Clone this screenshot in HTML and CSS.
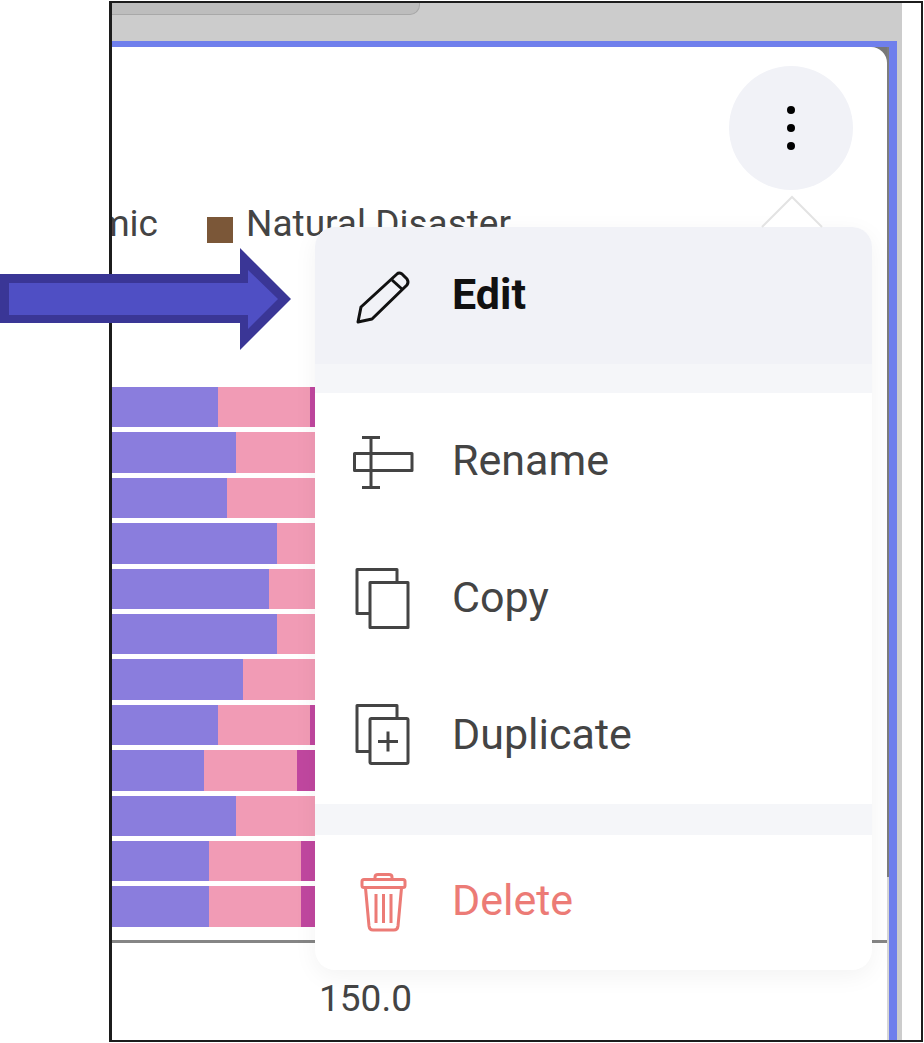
FILE: index.html
```html
<!DOCTYPE html>
<html lang="en">
<head>
    <meta charset="UTF-8">
    <title>Widget menu</title>
    <link rel="stylesheet" href="styles.css">
</head>
<body>
<div class="frame">
    <div class="window">
        <div class="top-strip">
            <div class="tab"></div>
        </div>
        <div class="panel">
            <div class="card">
                <div class="card-head">
                    <div class="kebab">
                        <span class="dot"></span>
                        <span class="dot"></span>
                        <span class="dot"></span>
                    </div>
                </div>
                <div class="legend">
                    <div class="legend-item"><span class="swatch swatch-purple"></span>Economic</div>
                    <div class="legend-item"><span class="swatch swatch-brown"></span>Natural Disaster</div>
                </div>
                <div class="chart">
                    <div class="bar"><span class="seg-a" style="width: 106px"></span><span class="seg-b" style="width: 92px"></span><span class="seg-c"></span></div>
                    <div class="bar"><span class="seg-a" style="width: 124px"></span><span class="seg-b" style="width: 92px"></span><span class="seg-c"></span></div>
                    <div class="bar"><span class="seg-a" style="width: 115px"></span><span class="seg-b" style="width: 92px"></span><span class="seg-c"></span></div>
                    <div class="bar"><span class="seg-a" style="width: 165px"></span><span class="seg-b" style="width: 92px"></span><span class="seg-c"></span></div>
                    <div class="bar"><span class="seg-a" style="width: 157px"></span><span class="seg-b" style="width: 92px"></span><span class="seg-c"></span></div>
                    <div class="bar"><span class="seg-a" style="width: 165px"></span><span class="seg-b" style="width: 92px"></span><span class="seg-c"></span></div>
                    <div class="bar"><span class="seg-a" style="width: 131px"></span><span class="seg-b" style="width: 92px"></span><span class="seg-c"></span></div>
                    <div class="bar"><span class="seg-a" style="width: 106px"></span><span class="seg-b" style="width: 92px"></span><span class="seg-c"></span></div>
                    <div class="bar"><span class="seg-a" style="width: 92px"></span><span class="seg-b" style="width: 93px"></span><span class="seg-c"></span></div>
                    <div class="bar"><span class="seg-a" style="width: 124px"></span><span class="seg-b" style="width: 92px"></span><span class="seg-c"></span></div>
                    <div class="bar"><span class="seg-a" style="width: 97px"></span><span class="seg-b" style="width: 92px"></span><span class="seg-c"></span></div>
                    <div class="bar"><span class="seg-a" style="width: 97px"></span><span class="seg-b" style="width: 92px"></span><span class="seg-c"></span></div>
                </div>
                <div class="axis">
                    <span class="tick">150.0</span>
                </div>
            </div>
            <div class="track">
                <div class="thumb"></div>
            </div>
        </div>
    </div>

    <div class="menu">
        <svg class="menu-tip" width="64" height="34" viewBox="0 0 64 34">
            <path d="M2 32 L32 2 L62 32" fill="#fff" stroke="#e3e3e3" stroke-width="2"/>
        </svg>
        <div class="menu-item menu-item-active">
            <svg class="icon icon-dark" viewBox="0 0 70 70">
                <path d="M8 61 L11 46 L47 13 Q49 11 52 13 L57 18 Q59 21 57 24 L22 58 Z"/>
                <path d="M42 19 L53 29"/>
            </svg>
            <span class="menu-label">Edit</span>
        </div>
        <div class="menu-sep"></div>
        <div class="menu-item">
            <svg class="icon" viewBox="0 0 70 70">
                <rect x="4.500" y="26.500" width="57.500" height="17"/>
                <path d="M21 10.500 V60.500 M12 10.500 H30 M12 60.500 H30"/>
            </svg>
            <span class="menu-label">Rename</span>
        </div>
        <div class="menu-item">
            <svg class="icon" viewBox="0 0 70 70">
                <rect x="7" y="5.500" width="40" height="44"/>
                <rect class="icon-front" x="20" y="18.500" width="38" height="45"/>
            </svg>
            <span class="menu-label">Copy</span>
        </div>
        <div class="menu-item">
            <svg class="icon" viewBox="0 0 70 70">
                <rect x="7" y="4.500" width="40" height="46"/>
                <rect class="icon-front" x="20" y="17.500" width="38" height="45" rx="1.500"/>
                <path d="M28 40.500 H48 M38 30.500 V50.500"/>
            </svg>
            <span class="menu-label">Duplicate</span>
        </div>
        <div class="menu-sep menu-sep-tall"></div>
        <div class="menu-item menu-item-delete">
            <svg class="icon icon-red" viewBox="0 0 70 70">
                <rect x="12" y="11.500" width="43" height="8" rx="2"/>
                <path d="M25 11 V9 Q25 6.500 28 6.500 H39 Q42 6.500 42 9 V11"/>
                <path d="M15.500 20 L19 58 Q19.500 62 23 62 H44 Q47.500 62 48 58 L51.500 20"/>
                <path d="M26 26 V55 M33.500 26 V55 M41 26 V55"/>
            </svg>
            <span class="menu-label">Delete</span>
        </div>
    </div>
</div>

<svg class="arrow" width="292" height="104" viewBox="0 0 292 104">
    <polygon points="0,27 240,27 240,1 291,52 240,103 240,76 0,76" fill="#3a3696"/>
    <polygon points="9,36 248,36 248,23 278,52 248,82 248,68 9,68" fill="#4f4fc4"/>
</svg>
</body>
</html>
```

FILE: styles.css
```css
* {
    box-sizing: border-box;
}

body {
    margin: 1px 1px 1px 109px;
    background-color: #fff;
    font-family: Roboto, "Liberation Sans", sans-serif;
    color: #444;
}

.frame {
    position: relative;
    height: 1041px;
    border: 2px solid #1c1c1c;
    border-left-width: 3px;
    background-color: #fff;
}

.window {
    width: 790px;
    height: 100%;
    background-color: #ccc;
}

.top-strip {
    height: 38px;
}

.tab {
    width: 308px;
    height: 12px;
    background-color: #bdbdbd;
    border-bottom: 1px solid #a8a8a8;
    border-right: 1px solid #a8a8a8;
    border-bottom-right-radius: 10px;
}

.panel {
    display: flex;
    width: 785px;
    height: 999px;
    background-color: #777;
    border-top: 6px solid #6f7fec;
    border-right: 8px solid #6f7fec;
}

.card {
    flex: 1;
    overflow: hidden;
    background-color: #fff;
    border-top-right-radius: 16px;
}

.track {
    width: 2px;
    background-color: #d6d6d6;
}

.thumb {
    height: 830px;
    background-color: #7d7d7d;
}

.card-head {
    display: flex;
    justify-content: flex-end;
    padding: 19px 34px 0 0;
}

.kebab {
    display: flex;
    flex-direction: column;
    align-items: center;
    justify-content: center;
    gap: 10px;
    width: 124px;
    height: 124px;
    border-radius: 50%;
    background-color: #f1f2f7;
}

.dot {
    width: 8px;
    height: 8px;
    border-radius: 50%;
    background-color: #000;
}

.legend {
    display: flex;
    justify-content: flex-end;
    gap: 49px;
    height: 197px;
    padding: 13px 376px 0 0;
    font-size: 37px;
    line-height: 42px;
    white-space: nowrap;
}

.legend-item {
    display: flex;
    flex: none;
    align-items: flex-start;
    gap: 13px;
}

.swatch {
    width: 26px;
    height: 26px;
    margin-top: 14px;
}

.swatch-purple {
    background-color: #8a7ddd;
}

.swatch-brown {
    background-color: #7b5738;
}

.chart {
    display: flex;
    flex-direction: column;
    gap: 5px;
}

.bar {
    display: flex;
    height: 40.4px;
}

.seg-a {
    background-color: #8a7ddd;
}

.seg-b {
    background-color: #f19bb5;
}

.seg-c {
    width: 120px;
    background-color: #c0479f;
}

.axis {
    margin-top: 13px;
    padding: 35px 0 0 207px;
    border-top: 3px solid #858585;
    font-size: 37px;
    line-height: 42px;
}

.menu {
    position: absolute;
    top: 224px;
    left: 203px;
    width: 557px;
    height: 743px;
    background-color: #fff;
    border-radius: 20px;
    box-shadow: 0 6px 24px rgba(0, 0, 0, 0.05);
}

.menu-tip {
    position: absolute;
    top: -32px;
    left: 445px;
}

.menu-item {
    display: flex;
    align-items: center;
    gap: 32px;
    height: 137px;
    padding-left: 35px;
    font-size: 43px;
}

.menu-label {
    margin-bottom: 3px;
}

.menu-item-active {
    background-color: #f1f2f7;
    border-radius: 20px 20px 0 0;
    color: #111;
    font-weight: 700;
}

.menu-item-delete {
    height: 136px;
    color: #ec7b76;
}

.menu-item-delete .menu-label {
    margin-bottom: 6px;
}

.menu-sep {
    height: 29px;
    background-color: #f5f6f9;
}

.menu-sep-tall {
    height: 31px;
}

.icon {
    flex: none;
    width: 70px;
    height: 70px;
    fill: none;
    stroke: #444;
    stroke-width: 3;
    stroke-linejoin: round;
}

.icon-dark {
    stroke: #111;
}

.icon-red {
    stroke: #ec7b76;
}

.icon-front {
    fill: #fff;
}

.arrow {
    position: absolute;
    top: 247px;
    left: 0;
}
```
